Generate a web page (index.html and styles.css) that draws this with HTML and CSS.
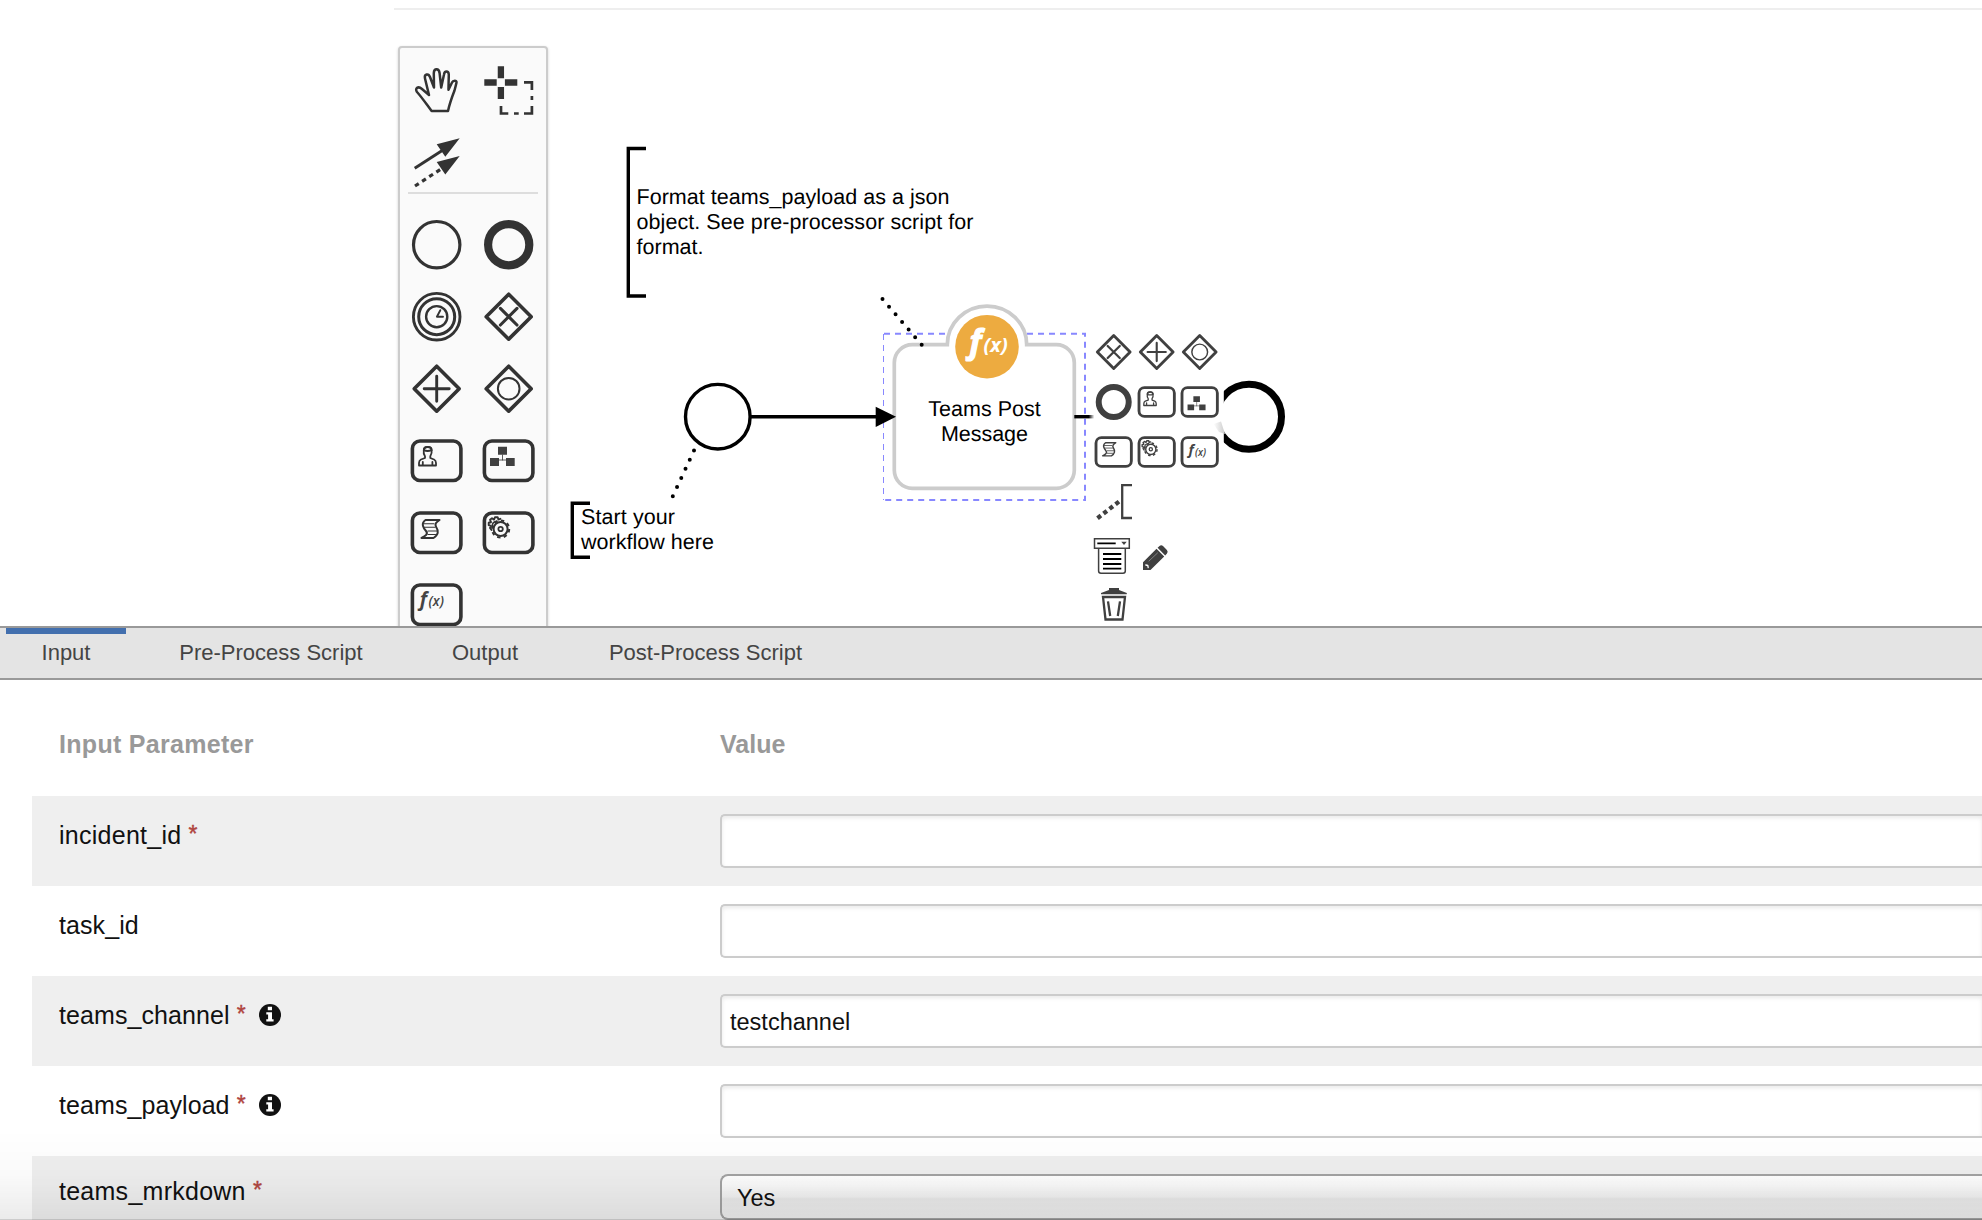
FILE: index.html
```html
<!DOCTYPE html>
<html lang="en">
<head>
<meta charset="utf-8">
<title>Workflow editor</title>
<link rel="stylesheet" href="styles.css">
</head>
<body>
<svg class="defs" width="0" height="0" aria-hidden="true">
  <defs>
    <g id="diamond"><path class="outline" d="M35.7 13.2 58.2 35.7 35.7 58.2 13.2 35.7Z"/></g>
    <g id="xor"><use href="#diamond"/><path d="M27.4 27.4 44 44M44 27.4 27.4 44" stroke-width="3.1"/></g>
    <g id="and"><use href="#diamond"/><path d="M35.7 23.2V48.2M23.2 35.7H48.2" stroke-width="2.9"/></g>
    <g id="or"><use href="#diamond"/><circle cx="35.7" cy="35.7" r="10.8" stroke-width="2"/></g>
    <g id="ring"><circle cx="35.7" cy="35.7" r="20.6" stroke-width="8.2"/></g>
    <g id="box"><rect class="outline" x="11.4" y="16" width="48.5" height="39.5" rx="7.5"/></g>
    <g id="user"><path d="M22.8 25.500C22.800 20.800 30.600 20.800 30.600 25.500C31 27.500 30.400 29.500 29.300 31.200V33L33 34.500Q35 35.500 35 38V40.500H18V38Q18 35.500 20 34.500L24 33V31.200C22.700 29.500 22.400 27.500 22.800 25.500ZM21.800 40.500V37M31.400 40.500V37" stroke-width="1.800"/><path d="M22.800 25.200C22.800 20.800 30.600 20.800 30.600 25.200Q26.500 26.800 22.800 25.200" stroke-width="1.800"/></g>
    <g id="sub"><path class="solid" d="M25 21.800h9v8h-9zM17 33h9v8h-9zM33 33h8.700v8H33z"/><path d="M29.500 30v5M26 35h7" stroke-width=".8"/></g>
    <g id="script"><path d="M24.500 23H38.500C35 25.500 33.300 27 35.300 30.200C37.800 34 37.500 38 32.500 41H20.500C24.500 39 27.500 37 25 34C22.500 31 19.500 26.500 24.500 23Z" stroke-width="2"/><path d="M23 26.800H33M23.500 30.300H34M27 34H36M27 37.500H34.500" stroke-width="1.100"/></g>
    <g id="gears"><path d="M18.500 33 17 31l1-2-2.300-.800v-2.500l2.300-.500-1-2.500 2-1.500 2 1.400 1-2.400h2.700l.700 2.300 2-.700" stroke-width="1.900"/><path d="M19.500 29.500Q18.800 25 23.300 24.500" stroke-width="1.600"/><circle cx="27.600" cy="32" r="8.600" stroke-width="2" stroke-dasharray="3.400 3.354" stroke-linecap="butt"/><circle cx="27.600" cy="32" r="7" stroke-width="2"/><circle cx="27.600" cy="32" r="2.200" stroke-width="1.800"/></g>
    <g id="fx"><text x="18.800" y="36.800" class="fx-f">f</text><text x="27.600" y="37.200" class="fx-x">(x)</text></g>
  </defs>
</svg>

<main class="canvas">
  <svg class="diagram" width="1982" height="626" viewBox="0 0 1982 626">
    <defs>
      <linearGradient id="fade"><stop offset=".72" stop-color="#000"/><stop offset="1" stop-color="#000" stop-opacity="0"/></linearGradient>
      <linearGradient id="smear"><stop offset="0" stop-color="#fff"/><stop offset="1" stop-color="#ccc"/></linearGradient>
    </defs>
    <path d="M394 9H1982" stroke="#eee" stroke-width="2"/>
    <g class="shape">
      <path d="M646 148.500H628.300V296H646"/>
      <path d="M590 503.200H572.300V557.200H590"/>
      <circle cx="717.800" cy="416.700" r="32.300"/>
      <path d="M751 416.700H880"/>
    </g>
    <g class="label">
      <text x="636.500" y="203.700" textLength="313">Format teams_payload as a json</text>
      <text x="636.500" y="228.700" textLength="337">object. See pre-processor script for</text>
      <text x="636.500" y="253.700" textLength="67">format.</text>
      <text x="581" y="523.700" textLength="94">Start your</text>
      <text x="581" y="548.900" textLength="133">workflow here</text>
    </g>
    <path class="selection thin" d="M883.500 334V500"/>
    <path class="selection" d="M884 333.800H1085V500H884"/>
    <path class="task" d="M912.300 344.700H947.300A39.700 38.700 0 0 1 1026.700 344.700H1056.300A18 18 0 0 1 1074.300 362.700V470.300A18 18 0 0 1 1056.300 488.300H912.300A18 18 0 0 1 894.300 470.300V362.700A18 18 0 0 1 912.300 344.700Z"/>
    <path class="dots" d="M882.500 299 922 345.200M694 450.600 672.500 496.800"/>
    <path d="M875.700 406.700 896 416.700 875.700 427Z"/>
    <circle cx="987" cy="346.700" r="31.800" fill="#edab40"/>
    <text class="badge-f" x="969.500" y="352.500">f</text>
    <text class="badge-x" x="983.500" y="352">(x)</text>
    <g class="label mid">
      <text x="984.500" y="415.700" textLength="112.500">Teams Post</text>
      <text x="984.500" y="440.900" textLength="87">Message</text>
    </g>
    <rect x="1074.300" y="415" width="20" height="3.400" fill="url(#fade)"/>
    <circle cx="1249" cy="416.800" r="32.500" stroke="#000" stroke-width="7" fill="#fff"/>
    <rect x="1205" y="375" width="18.800" height="85" fill="#fff"/>
    <path d="M1213.500 424 1221 421.500 1225 434 1219 432Z" fill="url(#smear)"/>
  </svg>

  <aside class="palette">
    <div class="tools">
      <svg class="icon" viewBox="0 0 72 72"><path d="M30.600 57H47C48.500 50 51 43 53.500 36.500Q55 31 55.500 28.500C56 26 52 26 51 28.500L47.500 35.800V34L47.800 20.500C47.500 16.500 43.500 16.500 43 20.500L40.200 33.500 38.600 19C38 14 33 14 32.800 19L33 33.500 29 23C27.500 19 23 20 24 24.500L28 41 21 35C17 31.500 13.500 34.500 16 38C21 43.500 26 51 30.600 57Z" stroke-width="2.500"/></svg>
      <svg class="icon sharp" viewBox="0 0 72 72"><path stroke-width="6.300" d="M27.900 12.300V24.300M27.900 33V45M11.300 28.500H23.700M31.900 28.500H44.300"/><path stroke-width="2.700" d="M51 28.300H58.900V36M58.900 42V46M58.900 52V59.500H51M45.700 59.500H41M35.300 59.500H28V52"/></svg>
      <svg class="icon sharp" viewBox="0 0 72 72"><path stroke-width="2.900" d="M13.700 42.300 42 24"/><path stroke-width="3.200" stroke-dasharray="4.500 4" d="M14 60 42 41.700"/><path class="solid" d="M58.700 12.300 35.700 18.300 44.300 30.700ZM58.700 30 35.700 36 44.300 48.400Z"/></svg>
    </div>
    <hr class="separator">
    <div class="tools">
      <svg class="icon" viewBox="0 0 72 72"><circle cx="35.700" cy="35.700" r="23.200" stroke-width="3.200"/></svg>
      <svg class="icon" viewBox="0 0 72 72"><use href="#ring"/></svg>
      <svg class="icon" viewBox="0 0 72 72"><circle cx="35.700" cy="35.700" r="23.300" stroke-width="2.900"/><circle cx="35.700" cy="35.700" r="18" stroke-width="3"/><circle cx="35.700" cy="35.700" r="10.600" stroke-width="2.400"/><path d="M39.300 29.200 35.900 35.700H42" stroke-width="1.900"/></svg>
      <svg class="icon" viewBox="0 0 72 72"><use href="#xor"/></svg>
      <svg class="icon" viewBox="0 0 72 72"><use href="#and"/></svg>
      <svg class="icon" viewBox="0 0 72 72"><use href="#or"/></svg>
      <svg class="icon" viewBox="0 0 72 72"><use href="#box"/><use href="#user"/></svg>
      <svg class="icon" viewBox="0 0 72 72"><use href="#box"/><use href="#sub"/></svg>
      <svg class="icon" viewBox="0 0 72 72"><use href="#box"/><use href="#script"/></svg>
      <svg class="icon" viewBox="0 0 72 72"><use href="#box"/><use href="#gears"/></svg>
      <svg class="icon" viewBox="0 0 72 72"><use href="#box"/><use href="#fx"/></svg>
    </div>
  </aside>

  <div class="context-pad">
    <svg class="entry" viewBox="5.900 1.400 59 68.600"><use href="#xor"/></svg>
    <svg class="entry" viewBox="5.900 1.400 59 68.600"><use href="#and"/></svg>
    <svg class="entry" viewBox="5.900 1.400 59 68.600"><use href="#or"/></svg>
    <svg class="entry" viewBox="5.900 1.400 59 68.600"><use href="#ring"/></svg>
    <svg class="entry" viewBox="5.900 1.400 59 68.600"><use href="#box"/><use href="#user"/></svg>
    <svg class="entry" viewBox="5.900 1.400 59 68.600"><use href="#box"/><use href="#sub" x="2" y="6"/></svg>
    <svg class="entry" viewBox="5.900 1.400 59 68.600"><use href="#box"/><use href="#script"/></svg>
    <svg class="entry" viewBox="5.900 1.400 59 68.600"><use href="#box"/><use href="#gears"/></svg>
    <svg class="entry" viewBox="5.900 1.400 59 68.600"><use href="#box"/><use href="#fx" x="1.500" y="3.500"/></svg>
    <svg class="entry first sharp" viewBox="0 0 43 50"><path d="M40 8.200H30.200V41H40" stroke-width="2.300"/><path d="M5.500 41.200 27.800 24" stroke-width="4.300" stroke-dasharray="4.300 3.300"/></svg>
    <svg class="entry first sharp" viewBox="0 0 43 50"><path d="M2.500 11.800H37.300V21.200H2.500ZM6.600 21.200V44Q6.600 46.200 9 46.200H31Q33.300 46.200 33.300 44V21.200" stroke-width="1.500"/><path d="M5.300 16.300H23.700M11 27H29.300M11 32H29.300M11 37H29.300M11 41.700H29.300" stroke="#000" stroke-width="1.800"/><path class="solid" d="M29.300 14.700H34.700L32 18Z"/></svg>
    <svg class="entry" viewBox="0 0 43 50"><path class="solid" d="M8 43V35.300L21.500 21.800 29.200 29.500 15.500 43ZM22.600 20.700 24.500 18.900Q26.300 17.400 28 19L31.900 22.900Q33.400 24.700 32 26.500L30.200 28.400Z"/><path d="M10.800 38 12.800 38.500 13.200 40.500" stroke="#fff" stroke-width="1.300"/><path d="M14 34 22.500 26" stroke="#aaa" stroke-width=".6"/></svg>
    <svg class="entry first sharp" viewBox="0 0 43 50"><path class="solid" d="M9 17.300V16L17 13V11H27V13L34.800 16V17.300Z"/><path d="M11 20H33L30.500 42.500H13.500Z" stroke-width="2.300"/><path d="M16 24.300 18.200 39M28 24.300 25.800 39" stroke-width="2.300"/></svg>
  </div>
</main>

<section class="panel">
  <nav class="tabs">
    <a class="tab tab-input active">Input</a>
    <a class="tab tab-pre">Pre-Process Script</a>
    <a class="tab tab-output">Output</a>
    <a class="tab tab-post">Post-Process Script</a>
  </nav>
  <div class="params">
    <div class="head"><span class="head-name">Input Parameter</span><span>Value</span></div>
    <div class="row"><label class="loose">incident_id <i>*</i></label><div class="field"></div></div>
    <div class="row"><label>task_id</label><div class="field"></div></div>
    <div class="row"><label>teams_channel <i>*</i> <svg class="info" viewBox="0 0 22 22"><circle cx="11" cy="11" r="11"/><path fill="#fff" d="M8.800 2.800h4.200v3.400H8.800zM7.300 8.200H13v7h1.600v2.400H7.300v-2.400h1.800v-4.600H7.300z"/></svg></label><div class="field">testchannel</div></div>
    <div class="row"><label>teams_payload <i>*</i> <svg class="info" viewBox="0 0 22 22"><circle cx="11" cy="11" r="11"/><path fill="#fff" d="M8.800 2.800h4.200v3.400H8.800zM7.300 8.200H13v7h1.600v2.400H7.300v-2.400h1.800v-4.600H7.300z"/></svg></label><div class="field"></div></div>
    <div class="row last"><label class="loose">teams_mrkdown <i>*</i></label><div class="field select">Yes</div></div>
  </div>
</section>
</body>
</html>
```

FILE: styles.css
```css
* { box-sizing: border-box; }

body {
  margin: 0;
  width: 1982px;
  height: 1220px;
  overflow: hidden;
  position: relative;
  display: flex;
  flex-direction: column;
  background: #fff;
  font-family: "Liberation Sans", Arial, sans-serif;
  color: #111;
}

.defs { position: absolute; }

/* workflow canvas */
.canvas {
  position: relative;
  height: 626px;
  flex: none;
  overflow: hidden;
}

.diagram { position: absolute; left: 0; top: 0; }
.shape { fill: none; stroke: #000; stroke-width: 3.4px; }
.label { font-size: 21.5px; fill: #000; text-rendering: geometricPrecision; }
.mid { text-anchor: middle; }
.selection { fill: none; stroke: #8888ff; stroke-width: 2px; stroke-dasharray: 6 5; }
.selection.thin { stroke-width: 1px; }
.task { fill: #fff; stroke: #ccc; stroke-width: 3.7px; }
.dots { stroke: #000; stroke-width: 4px; stroke-linecap: round; stroke-dasharray: 0 10.05; }

.badge-f, .badge-x, .fx-f, .fx-x {
  font-family: "Open Sans", sans-serif;
  font-style: italic;
}
.badge-f { font-size: 32px; font-weight: 700; fill: #fff; stroke: #fff; stroke-width: 1.2px; }
.badge-x { font-size: 20px; font-weight: 700; fill: #fff; }
.fx-f { font-size: 19.5px; font-weight: 700; }
.fx-x { font-size: 13.5px; font-weight: 600; }
.fx-f, .fx-x { fill: #444; stroke: none; }

.palette {
  position: absolute;
  left: 398px;
  top: 46px;
  width: 150px;
  height: 620px;
  padding: 6px 1px 0;
  border: 2px solid #ccc;
  border-radius: 4px;
  background: #fafafa;
  box-shadow: 0 1px 3px rgba(0, 0, 0, .18);
}
.tools { display: grid; grid-template-columns: 72px 72px; grid-auto-rows: 72px; }
.separator { height: 2px; margin: -6px 7px 15px; border: 0; background: #ddd; }

.icon, .entry {
  fill: none;
  stroke: #333;
  stroke-linecap: round;
  stroke-linejoin: round;
}
.icon { width: 72px; height: 72px; --outline: 3.6px; }
.outline { stroke-width: var(--outline); }
.sharp { stroke-linecap: butt; stroke-linejoin: miter; }
.solid { fill: #404040; stroke: none; }
.icon .solid { fill: #333; }

.context-pad {
  position: absolute;
  left: 1092px;
  top: 327px;
  display: grid;
  grid-template-columns: repeat(3, 43.2px);
  grid-auto-rows: 50px;
}
.entry { width: 43px; height: 50px; stroke: #404040; --outline: 3.9px; }
.context-pad .first { grid-column: 1; }

/* property panel */
.panel { flex: 1; background: #fff; }
.tabs {
  display: flex;
  height: 54px;
  padding-left: 6px;
  border-top: 2px solid #999;
  border-bottom: 2px solid #999;
  background: #e4e4e4;
}
.tab {
  height: 50px;
  padding-top: 12px;
  border-top: 0 solid #426fae;
  font-size: 22px;
  line-height: 26px;
  color: #444;
  text-align: center;
  white-space: nowrap;
}
.tab.active { border-top-width: 6px; padding-top: 6px; }
.tab-input { width: 120px; }
.tab-pre { width: 290px; }
.tab-output { width: 138px; }
.tab-post { width: 303px; }

.params { padding-left: 32px; }
.head, .row {
  display: grid;
  grid-template-columns: 661px 1fr;
  padding-left: 27px;
}
.head {
  height: 116px;
  padding-top: 50px;
  font-size: 25px;
  line-height: 28px;
  font-weight: 700;
  color: #999;
}
.head-name { letter-spacing: .3px; }
.row { height: 90px; padding-top: 18px; }
.row:nth-child(even) { background: #efefef; }
.row label { padding-top: 7px; font-size: 25px; line-height: 28px; white-space: nowrap; letter-spacing: .08px; }
.row .loose { letter-spacing: .26px; }
.row i { font-style: normal; font-size: 23px; color: #b0453f; position: relative; top: -2px; -webkit-text-stroke: .4px #b0453f; }
.info { width: 22px; height: 22px; margin-left: 6px; vertical-align: -2px; fill: #111; }
.field {
  height: 54px;
  padding: 0 8px;
  border: 2px solid #ccc;
  border-right: 0;
  border-radius: 5px 0 0 5px;
  background: #fff;
  box-shadow: inset 0 2px 4px rgba(0, 0, 0, .09);
  font-size: 23.5px;
  line-height: 52px;
}
.last { height: 64px; }
.row.last label { padding-top: 3px; }
.select {
  height: 46px;
  padding-left: 15px;
  border-color: #a2a2a2;
  border-radius: 8px 0 0 8px;
  background: linear-gradient(#fff 0%, #fafafa 25%, #f0f0f0 50%, #e9e9e9 54%, #efefef 100%);
  line-height: 44px;
  box-shadow: none;
}

/* shade along the bottom window edge */
body::after {
  content: "";
  position: absolute;
  left: 0;
  bottom: 0;
  width: 100%;
  height: 90px;
  background: linear-gradient(rgba(0, 0, 0, 0), rgba(0, 0, 0, .02) 50%, rgba(0, 0, 0, .08));
  border-bottom: 1px solid rgba(0, 0, 0, .2);
}
```
